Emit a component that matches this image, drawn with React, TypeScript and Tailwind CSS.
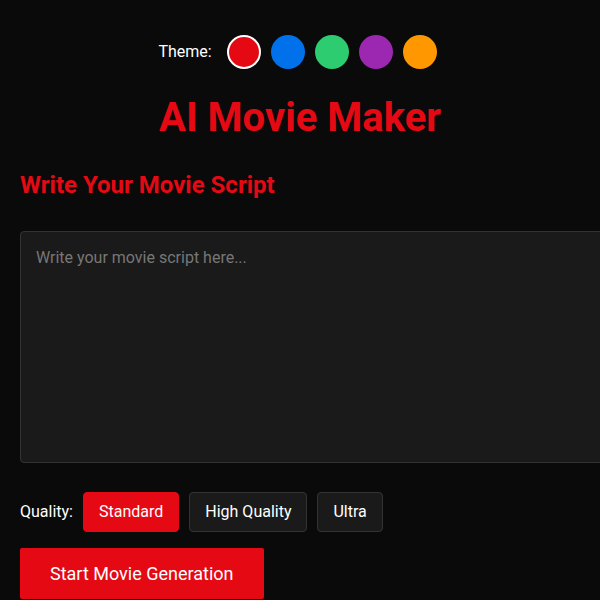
import React, { useState } from 'react';

const THEMES = ['#e50914', '#0071eb', '#2ecc71', '#9c27b0', '#ff9800'];
const QUALITIES = ['Standard', 'High Quality', 'Ultra'];

export default function App() {
  const [theme, setTheme] = useState(0);
  const [quality, setQuality] = useState(0);
  const [script, setScript] = useState('');

  return (
    <div
      className="min-h-screen w-full overflow-hidden bg-[#0a0a0a] text-white"
      style={{ fontFamily: 'Roboto, "Liberation Sans", sans-serif' }}
    >
      <div className="px-5 pt-[35px]">
        {/* Theme picker */}
        <div className="flex items-center justify-center gap-[10px] pr-[5px]">
          <span className="mr-[5px] text-base">Theme:</span>
          {THEMES.map((c, i) => (
            <button
              key={c}
              onClick={() => setTheme(i)}
              className={
                i === theme
                  ? 'h-[34px] w-[34px] rounded-full border-2 border-white'
                  : 'h-[34px] w-[34px] rounded-full border-2 border-transparent'
              }
              style={{ backgroundColor: c }}
            />
          ))}
        </div>

        <h1 className="mt-[25px] text-center text-[40px] font-bold leading-[48px] text-[#e50914]">
          AI Movie Maker
        </h1>

        <h2 className="mt-[27px] text-[24px] font-bold leading-[32px] text-[#e50914]">
          Write Your Movie Script
        </h2>

        <textarea
          value={script}
          onChange={e => setScript(e.target.value)}
          placeholder="Write your movie script here..."
          className="mt-[30px] block h-[232px] w-[620px] resize-none rounded-[4px] border border-[#333] bg-[#1a1a1a] px-[15px] py-[14px] text-base text-white outline-none placeholder:text-[#777]"
        />

        {/* Quality */}
        <div className="mt-[29px] flex items-center gap-[10px]">
          <span className="text-base">Quality:</span>
          {QUALITIES.map((q, i) => (
            <button
              key={q}
              onClick={() => setQuality(i)}
              className={
                i === quality
                  ? 'h-10 rounded-[4px] border border-[#e50914] bg-[#e50914] px-[15px] text-base text-white'
                  : 'h-10 rounded-[4px] border border-[#333] bg-[#1a1a1a] px-[15px] text-base text-white'
              }
            >
              {q}
            </button>
          ))}
        </div>

        <button className="mt-4 rounded-[2px] bg-[#e50914] px-[30px] py-[15px] text-lg leading-[21px] text-white">
          Start Movie Generation
        </button>
      </div>
    </div>
  );
}
